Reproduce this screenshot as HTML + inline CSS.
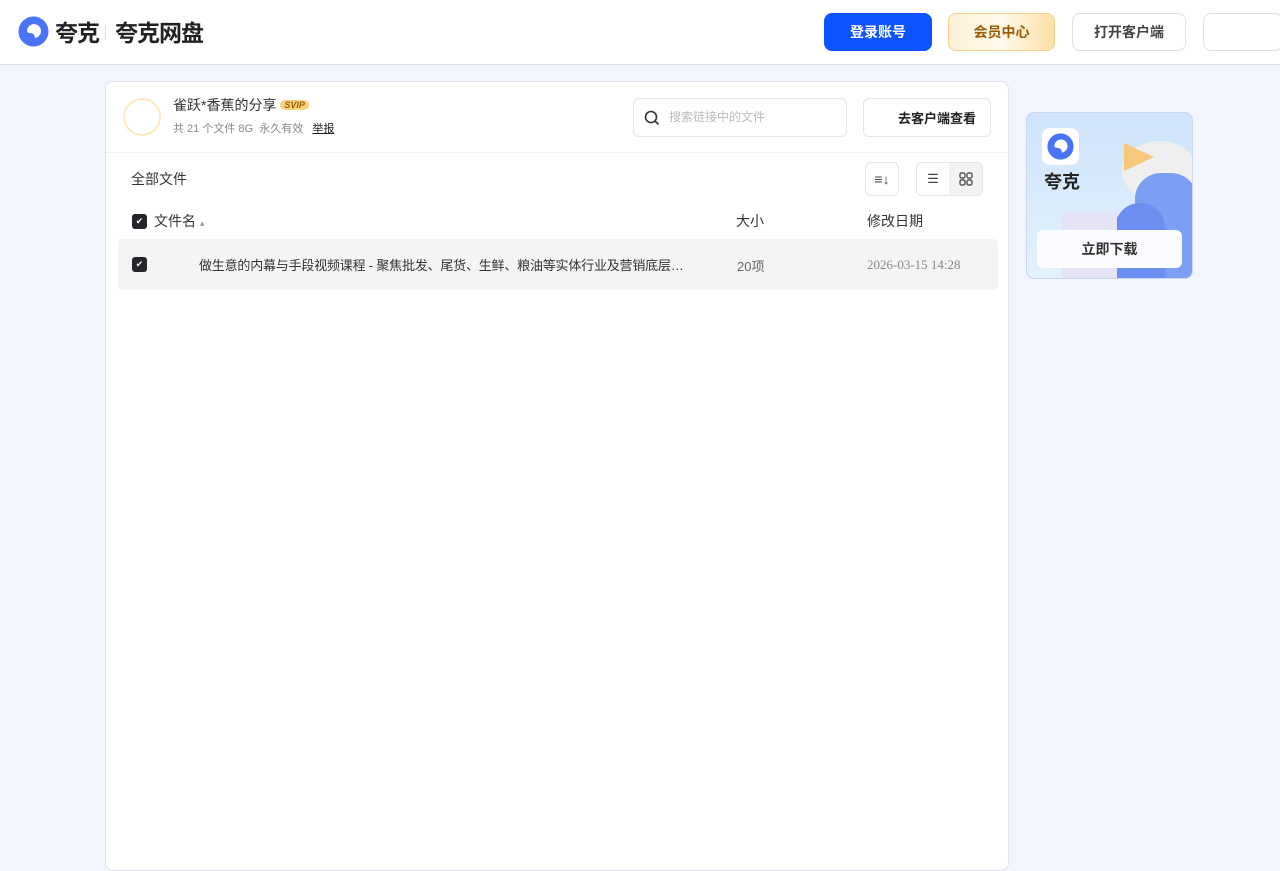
<!DOCTYPE html>
<html><head><meta charset="utf-8"><style>
*{margin:0;padding:0;box-sizing:border-box}
body{width:1280px;height:853px;overflow:hidden;background:#f2f5fd;font-family:"Liberation Sans","Noto Sans CJK SC",sans-serif;position:relative}
.hdr{position:absolute;left:0;top:0;width:1280px;height:65px;background:#fff;border-bottom:1px solid #dcdfe6}
.abs{position:absolute}
.btn{position:absolute;top:13px;height:38px;border-radius:8px;font-size:14px;font-weight:bold;display:flex;align-items:center;justify-content:center}
.card{position:absolute;left:105px;top:81px;width:904px;height:790px;background:#fff;border:1px solid #dfe2ea;border-radius:8px}
.cb{position:absolute;width:15px;height:15px;background:#25262b;border-radius:3px;color:#fff;font-size:9px;line-height:15px;text-align:center}
</style></head><body>
<div class="hdr">
 <svg class="abs" style="left:18px;top:16px" width="31" height="31" viewBox="0 0 31 31"><circle cx="15.5" cy="15.5" r="15" fill="#4a74f7"/><path d="M9 15a7 7 0 1 1 8 7c0-3-2-5-5-5 -2 0-3-1-3-2z" fill="#fff"/></svg>
 <div class="abs" style="left:55px;top:14px;font-size:23px;font-weight:bold;color:#222;letter-spacing:-1px">夸克</div>
 <div class="abs" style="left:105px;top:26px;width:1px;height:14px;background:#ddd"></div>
 <div class="abs" style="left:115px;top:14px;font-size:23px;font-weight:bold;color:#222;letter-spacing:-1px">夸克网盘</div>
 <div class="btn" style="left:824px;width:108px;background:#0d53ff;color:#fff">登录账号</div>
 <div class="btn" style="left:948px;width:107px;background:linear-gradient(90deg,#fdf1d8,#fff9ea,#fde0a8);border:1px solid #f5d08c;color:#9a5a00">会员中心</div>
 <div class="btn" style="left:1072px;width:114px;border:1px solid #dcdfe6;color:#444">打开客户端</div>
 <div class="btn" style="left:1203px;width:80px;border:1px solid #dcdfe6"></div>
</div>
<div class="card">
 <div class="abs" style="left:17px;top:16px;width:38px;height:38px;border-radius:50%;border:2px solid #fde9be"></div>
 <div class="abs" style="left:67px;top:13px;font-size:14px;color:#333">雀跃*香蕉的分享 <span style="display:inline-block;font-size:9px;font-style:italic;font-weight:bold;color:#a05a00;background:#f9d37f;border-radius:6px;padding:0 4px;vertical-align:2px">SVIP</span></div>
 <div class="abs" style="left:67px;top:38px;font-size:11px;color:#888">共 21 个文件 8G &nbsp;永久有效 &nbsp; <span style="color:#222;text-decoration:underline">举报</span></div>
 <div class="abs" style="left:527px;top:16px;width:214px;height:39px;border:1px solid #e3e5ea;border-radius:6px">
  <svg class="abs" style="left:10px;top:11px" width="16" height="16" viewBox="0 0 16 16"><circle cx="7" cy="7" r="5.5" stroke="#333" stroke-width="1.6" fill="none"/><path d="M11 11l3.5 3.5" stroke="#333" stroke-width="1.6"/></svg>
  <div class="abs" style="left:35px;top:9px;font-size:12px;color:#bbb">搜索链接中的文件</div>
 </div>
 <div class="abs" style="left:757px;top:16px;width:128px;height:39px;border:1px solid #e3e5ea;border-radius:6px;font-size:13px;font-weight:bold;color:#222;text-align:right;padding:9px 14px 0 0">去客户端查看</div>
 <div class="abs" style="left:0;top:70px;width:902px;height:1px;background:#f2f3f5"></div>
 <div class="abs" style="left:25px;top:87px;font-size:14px;color:#333">全部文件</div>
 <div class="abs" style="left:759px;top:80px;width:34px;height:34px;border:1px solid #e3e5ea;border-radius:6px;font-size:14px;text-align:center;line-height:32px;color:#444">≡↓</div>
 <div class="abs" style="left:810px;top:80px;width:67px;height:34px;border:1px solid #e3e5ea;border-radius:6px;overflow:hidden">
  <div class="abs" style="left:0;top:0;width:32px;height:32px;background:#fff;text-align:center;line-height:32px;font-size:13px;color:#444">☰</div>
  <div class="abs" style="left:32px;top:0;width:34px;height:32px;background:#f2f3f5">
   <svg class="abs" style="left:10px;top:9px" width="14" height="14" viewBox="0 0 14 14" fill="none" stroke="#555" stroke-width="1.4"><rect x="1" y="1" width="5" height="5" rx="1.5"/><rect x="8" y="1" width="5" height="5" rx="1.5"/><rect x="1" y="8" width="5" height="5" rx="1.5"/><rect x="8" y="8" width="5" height="5" rx="1.5"/></svg>
  </div>
 </div>
 <div class="cb" style="left:26px;top:132px">✔</div>
 <div class="abs" style="left:48px;top:129px;font-size:14px;color:#333">文件名 <span style="font-size:9px;color:#999">▴</span></div>
 <div class="abs" style="left:630px;top:129px;font-size:14px;color:#333">大小</div>
 <div class="abs" style="left:761px;top:129px;font-size:14px;color:#333">修改日期</div>
 <div class="abs" style="left:12px;top:157px;width:880px;height:51px;background:#f4f4f4;border-radius:4px"></div>
 <div class="cb" style="left:26px;top:175px">✔</div>
 <div class="abs" style="left:93px;top:173px;font-size:13px;color:#333;letter-spacing:-0.2px">做生意的内幕与手段视频课程 - 聚焦批发、尾货、生鲜、粮油等实体行业及营销底层…</div>
 <div class="abs" style="left:631px;top:174px;font-size:13px;color:#666">20项</div>
 <div class="abs" style="left:761px;top:175px;font-size:13px;color:#888;font-family:'Liberation Serif',serif">2026-03-15 14:28</div>
</div>
<div class="abs" style="left:1026px;top:112px;width:167px;height:167px;border-radius:8px;border:1px solid #c9d8ef;background:linear-gradient(180deg,#cfe3fb,#e2f2fc);overflow:hidden">
 <div class="abs" style="left:95px;top:28px;width:75px;height:60px;border-radius:50%;background:#efefef"></div>
 <div class="abs" style="left:97px;top:30px;width:0;height:0;border-left:30px solid #f7c77b;border-top:14px solid transparent;border-bottom:14px solid transparent"></div>
 <div class="abs" style="left:108px;top:60px;width:62px;height:110px;border-radius:26px 26px 0 0;background:#7b9ff2"></div>
 <div class="abs" style="left:88px;top:90px;width:50px;height:80px;border-radius:26px 26px 0 0;background:#6a8ff0"></div>
 <div class="abs" style="left:35px;top:100px;width:55px;height:70px;background:#e5e4f7"></div>
 <div class="abs" style="left:15px;top:15px;width:37px;height:37px;border-radius:8px;background:#fff"></div>
 <svg class="abs" style="left:19px;top:19px" width="29" height="29" viewBox="0 0 31 31"><circle cx="15.5" cy="15.5" r="14" fill="#4a74f7"/><path d="M9 15a7 7 0 1 1 8 7c0-3-2-5-5-5 -2 0-3-1-3-2z" fill="#fff"/></svg>
 <div class="abs" style="left:17px;top:55px;font-size:18px;font-weight:bold;color:#222">夸克</div>
 <div class="abs" style="left:10px;top:117px;width:145px;height:38px;border-radius:6px;background:#fbfcff;text-align:center;line-height:38px;font-size:14px;font-weight:bold;color:#333">立即下载</div>
</div>
</body></html>
